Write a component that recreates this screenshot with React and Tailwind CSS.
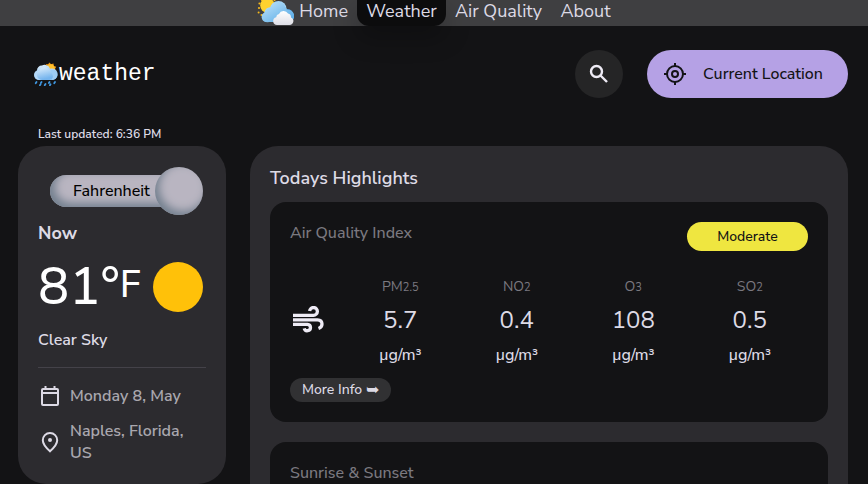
import React from 'react';

const links = [
  { label: 'Home', style: 'w-[63px] justify-end pr-[9px]' },
  { label: 'Weather', style: 'w-[89px] justify-center rounded-b-xl bg-[#0c0c0d] shadow-[0_12px_24px_rgba(0,0,0,0.25)]' },
  { label: 'Air Quality', style: 'w-[105px] justify-center' },
  { label: 'About', style: 'w-[69px] justify-center' },
];

const pollutants = [
  { name: 'PM', sub: '2.5', value: '5.7' },
  { name: 'NO', sub: '2', value: '0.4' },
  { name: 'O', sub: '3', value: '108' },
  { name: 'SO', sub: '2', value: '0.5' },
];

function SunCloudIcon() {
  return (
    <svg className="h-[26px] w-[37px] shrink-0" viewBox="0 0 37 26" aria-hidden="true">
      <defs>
        <linearGradient id="cloudBlue" x1="0" y1="0" x2="1" y2="1">
          <stop offset="0" stopColor="#c3e5fb" />
          <stop offset="1" stopColor="#4fa6e4" />
        </linearGradient>
        <linearGradient id="cloudWhite" x1="0" y1="0" x2="0" y2="1">
          <stop offset="0" stopColor="#ffffff" />
          <stop offset="1" stopColor="#dedee6" />
        </linearGradient>
      </defs>
      <g fill="#f5b81c">
        <circle cx="2" cy="8" r="1.1" /><circle cx="1.6" cy="12.5" r="1" /><circle cx="4.6" cy="15" r="1.1" />
        <circle cx="2.4" cy="3.6" r="1" /><circle cx="5" cy="0.6" r="1" /><circle cx="17.5" cy="0.3" r="1" />
      </g>
      <circle cx="10.5" cy="5.500" r="7.300" fill="#ffd22e" />
      <circle cx="10.500" cy="17" r="5.200" fill="#83c4f0" />
      <circle cx="13" cy="12.500" r="5.200" fill="#a9d9f8" />
      <circle cx="21.500" cy="9" r="8" fill="#a3d5f6" />
      <circle cx="30.500" cy="15" r="6" fill="#5cace6" />
      <path d="M10 22a5 5 0 0 1-2.5-9.500a5 5 0 0 1 5.500-4.500a8 8 0 0 1 15-1.500a6 6 0 0 1 2 3.500a6.200 6.200 0 0 1 3 12z" fill="url(#cloudBlue)" />
      <path d="M20 25a3.900 3.900 0 0 1-.8-7.700a3.500 3.500 0 0 1 2.800-3.300a5 5 0 0 1 9-.4a3.900 3.900 0 0 1 3 3.900a3.900 3.900 0 0 1-1.500 7.500z" fill="url(#cloudWhite)" />
    </svg>
  );
}

function RainCloudIcon() {
  return (
    <svg className="h-6 w-6 shrink-0" viewBox="0 0 24 24" aria-hidden="true">
      <defs>
        <linearGradient id="rainCloud" x1="0" y1="0" x2="0.3" y2="1">
          <stop offset="0" stopColor="#e4f2fd" />
          <stop offset="1" stopColor="#76b5ee" />
        </linearGradient>
      </defs>
      <path d="M11.5 2l2.500 .2l1.500-1.700l1.500 1.700l2.500-.8l.3 2.600l2.400.8l-1.200 2.200l1.500 2.200l-2.500 1.500z" fill="#f39a16" />
      <circle cx="16.5" cy="6.5" r="4.200" fill="#ffc02b" />
      <path d="M5 18a5 5 0 0 1-2-9.500a4.800 4.800 0 0 1 5-5a5.600 5.600 0 0 1 8 3.200a5.200 5.200 0 0 1 3.500 11.300z" fill="url(#rainCloud)" />
      <circle cx="5.200" cy="13" r="5" fill="#b5d9f8" />
      <circle cx="18.300" cy="13" r="5" fill="#9dccf5" />
      <path d="M6 17.500a5 5 0 0 1-.5-9a5.300 5.300 0 0 1 9-1.500a5 5 0 0 1 3 4a5 5 0 0 1 0 6.500z" fill="url(#rainCloud)" />
      <path d="M2.500 20l-.8 1.200M7.500 20l-.6 1M6.500 22.500l-.6 .8M11.500 22l-.8 1.300M15.500 20l-.6 1M16.500 22.300l-.6 1M21 20l-.8 1.200" stroke="#3f97e0" strokeWidth="1.800" strokeLinecap="round" />
    </svg>
  );
}

function SearchIcon() {
  return (
    <svg className="size-6" viewBox="0 0 24 24" fill="none" stroke="currentColor" strokeWidth="2.4" aria-hidden="true">
      <circle cx="9.5" cy="9.5" r="5.5" />
      <path d="M13.5 13.5l6.500 6.500" />
    </svg>
  );
}

function LocateIcon() {
  return (
    <svg className="size-6" viewBox="0 0 24 24" fill="none" stroke="currentColor" strokeWidth="2" aria-hidden="true">
      <circle cx="12" cy="12" r="8" />
      <circle cx="12" cy="12" r="3" />
      <path d="M12 1v3M12 20v3M1 12h3M20 12h3" />
    </svg>
  );
}

function CalendarIcon() {
  return (
    <svg className="size-6 shrink-0" viewBox="0 0 24 24" fill="none" stroke="currentColor" strokeWidth="2" aria-hidden="true">
      <rect x="4" y="5" width="16" height="16" rx="1" />
      <path d="M4 9h16M7.5 2v3M16.5 2v3" />
    </svg>
  );
}

function PinIcon() {
  return (
    <svg className="size-6 shrink-0" viewBox="0 0 24 24" aria-hidden="true">
      <path d="M12 3a7.200 7.200 0 0 0-7.200 7.300c0 3.400 2.400 6.800 7.200 11c4.800-4.200 7.200-7.600 7.200-11A7.200 7.200 0 0 0 12 3z" fill="none" stroke="currentColor" strokeWidth="2" />
      <circle cx="12" cy="10" r="2" fill="currentColor" />
    </svg>
  );
}

function WindIcon() {
  return (
    <svg className="h-[27px] w-8" viewBox="0 0 32 27" fill="none" stroke="currentColor" strokeWidth="3.3" aria-hidden="true">
      <path d="M1 9.300h20.500a3.900 3.900 0 1 0-3.900-4.300" />
      <path d="M1 13.800h24.500q4.500 .2 4.500 4.200q0 3.300-3.500 4.500" />
      <path d="M1 18.300h14.500a3.200 3.200 0 1 1-3.300 4" />
    </svg>
  );
}

export default function App() {
  return (
    <div className="h-screen overflow-y-auto bg-[#131315] font-['Nunito_Sans','Nunito','Open_Sans',sans-serif] text-[#dddae5] [scrollbar-width:none]">
      <nav className="flex h-[26px] justify-center bg-[#3f3f41] pl-[9px]">
        <SunCloudIcon />
        {links.map((link) => (
          <a key={link.label} href="#" className={`flex items-center pb-1 text-lg leading-6 ${link.style}`}>
            {link.label}
          </a>
        ))}
      </nav>

      <header className="flex items-center pt-6 pr-5 pl-[34px]">
        <a href="#" className="mr-auto flex items-center gap-px font-['Liberation_Mono',monospace] text-[23px] leading-6 text-white">
          <RainCloudIcon />
          weather
        </a>
        <button type="button" aria-label="Search" className="mr-6 flex size-12 items-center justify-center rounded-full bg-[#252526] text-[#eeebf5]">
          <SearchIcon />
        </button>
        <button type="button" className="flex h-12 w-[201px] items-center gap-4 rounded-full bg-[#b5a1e5] pl-4 text-base font-medium text-[#131315]">
          <LocateIcon />
          Current Location
        </button>
      </header>

      <main className="flex items-start gap-6 pt-7 pr-5 pl-[18px]">
        <aside className="w-[208px] shrink-0">
          <p className="h-5 px-5 text-xs leading-4 font-semibold">Last updated: 6:36 PM</p>
          <section className="rounded-[28px] bg-[#2c2b2f] px-5 pt-[21px] pb-5">
            <button type="button" className="ml-3 flex items-center text-base font-medium text-black">
              <span className="flex h-8 w-[129px] items-center rounded-l-full bg-[#b9b5c1] pl-[23px] leading-6 shadow-[inset_5px_-4px_9px_#74808f]">Fahrenheit</span>
              <span className="-ml-6 size-12 rounded-full bg-[#b9b5c1] shadow-[inset_4px_-4px_9px_#74808f]" />
            </button>
            <h2 className="mt-[6px] text-lg leading-6 font-bold">Now</h2>
            <div className="mt-3 flex h-[60px] items-center justify-between pr-[3px]">
              <p className="flex items-start text-[52px] leading-[60px] font-medium text-white">
                81°<span className="text-[38px] leading-[56px]">F</span>
              </p>
              <span className="size-[50px] shrink-0 rounded-full bg-[#ffc109]" />
            </div>
            <p className="mt-[11px] text-base leading-6 font-semibold">Clear Sky</p>
            <ul className="mt-[15px] flex flex-col gap-3 border-t border-[#444249] pt-4 text-base leading-[22px] font-semibold text-[#a9a7ae]">
              <li className="flex items-center gap-2"><span className="text-[#dddae5]"><CalendarIcon /></span>Monday 8, May</li>
              <li className="flex items-center gap-2"><span className="text-[#dddae5]"><PinIcon /></span>Naples, Florida, US</li>
            </ul>
          </section>
        </aside>

        <section className="mt-5 min-w-0 flex-1 rounded-[28px] bg-[#2c2b2f] p-5">
          <h2 className="text-lg leading-6 font-semibold">Todays Highlights</h2>
          <article className="mt-3 rounded-2xl bg-[#131315] p-5">
            <div className="flex items-start justify-between">
              <h3 className="text-base leading-[22px] font-medium text-[#7b7980]">Air Quality Index</h3>
              <span className="w-[121px] rounded-full bg-[#efe640] text-center text-sm leading-[29px] font-medium text-[#131315]">Moderate</span>
            </div>
            <div className="mt-6 flex items-center">
              <div className="w-[52px] pb-[3px] pl-[2px] text-[#eeebf5]"><WindIcon /></div>
              <ul className="grid flex-1 grid-cols-4 text-center">
                {pollutants.map((item) => (
                  <li key={item.name}>
                    <p className="text-sm leading-6 text-[#7b7980]">{item.name}<span className="text-[11px]">{item.sub}</span></p>
                    <p className="mt-1 text-2xl leading-8">{item.value}</p>
                    <p className="mt-[7px] text-base leading-6 font-medium">µg/m³</p>
                  </li>
                ))}
              </ul>
            </div>
            <button type="button" className="mt-[11px] flex h-6 items-center gap-1 rounded-full bg-[#313133] px-3 text-sm font-medium">
              More Info <span className="font-['DejaVu_Sans',sans-serif] text-base leading-6 font-bold">➥</span>
            </button>
          </article>
          <article className="mt-5 h-[220px] rounded-2xl bg-[#131315] p-5">
            <h3 className="text-base leading-[22px] font-medium text-[#7b7980]">Sunrise &amp; Sunset</h3>
          </article>
        </section>
      </main>
    </div>
  );
}
